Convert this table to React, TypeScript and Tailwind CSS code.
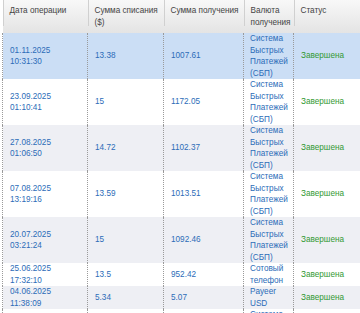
const rows = [
  { date: '01.11.2025', time: '10:31:30', sent: '13.38', got: '1007.61', cur: ['Система', 'Быстрых', 'Платежей', '(СБП)'], bg: 'bg-[#cbdef5]' },
  { date: '23.09.2025', time: '01:10:41', sent: '15', got: '1172.05', cur: ['Система', 'Быстрых', 'Платежей', '(СБП)'], bg: 'bg-white' },
  { date: '27.08.2025', time: '01:06:50', sent: '14.72', got: '1102.37', cur: ['Система', 'Быстрых', 'Платежей', '(СБП)'], bg: 'bg-[#eeeff4]' },
  { date: '07.08.2025', time: '13:19:16', sent: '13.59', got: '1013.51', cur: ['Система', 'Быстрых', 'Платежей', '(СБП)'], bg: 'bg-white' },
  { date: '20.07.2025', time: '03:21:24', sent: '15', got: '1092.46', cur: ['Система', 'Быстрых', 'Платежей', '(СБП)'], bg: 'bg-[#eeeff4]' },
  { date: '25.06.2025', time: '17:32:10', sent: '13.5', got: '952.42', cur: ['Сотовый', 'телефон'], bg: 'bg-white' },
  { date: '04.06.2025', time: '11:38:09', sent: '5.34', got: '5.07', cur: ['Payeer', 'USD'], bg: 'bg-[#eeeff4]' },
  { date: '08.05.2025', time: '12:04:55', sent: '13.2', got: '990.18', cur: ['Система', 'Быстрых', 'Платежей', '(СБП)'], bg: 'bg-white' },
];

const headers = [
  ['Дата операции'],
  ['Сумма списания', '($)'],
  ['Сумма получения'],
  ['Валюта', 'получения'],
  ['Статус'],
];

const widths = ['w-[85px]', 'w-[76px]', 'w-[80px]', 'w-[50px]', 'w-[67px]'];

export default function App() {
  return (
    <div className="w-[360px] h-[313px] overflow-hidden bg-white pl-[2px]" style={{ fontFamily: '"Liberation Sans", Arial, sans-serif' }}>
      <table className="w-[358px] border-collapse table-fixed text-[8.2px] leading-[11.5px]">
        <thead>
          <tr className="h-[33px] bg-gradient-to-b from-[#f8f8f8] to-[#e4e4e4]">
            {headers.map((h, i) => (
              <th key={i} className={`${widths[i]} align-top text-left font-normal text-[#444] pl-[7px] pr-[2px] pt-[5px] relative`}>
                <span className="absolute left-0 top-0 h-[26px] w-px bg-[#d0d0d0]" />
                {h.map((l, j) => (
                  <div key={j} className="whitespace-nowrap">{l}</div>
                ))}
              </th>
            ))}
          </tr>
        </thead>
        <tbody>
          {rows.map((r, i) => (
            <tr key={i} className={r.bg}>
              <td className="align-middle text-[#2c6cb8] pl-[7px] border-l border-dotted border-[#9a9a9a]">
                <div>{r.date}</div>
                <div>{r.time}</div>
              </td>
              <td className="align-middle text-[#2c6cb8] pl-[7px] border-l border-dotted border-[#9a9a9a]">{r.sent}</td>
              <td className="align-middle text-[#2c6cb8] pl-[7px] border-l border-dotted border-[#9a9a9a]">{r.got}</td>
              <td className="align-middle text-[#2c6cb8] pl-[6px] border-l border-r border-dotted border-[#9a9a9a]">
                {r.cur.map((c, j) => (
                  <div key={j}>{c}</div>
                ))}
              </td>
              <td className="align-middle text-[#339933] pl-[7px]">Завершена</td>
            </tr>
          ))}
        </tbody>
      </table>
    </div>
  );
}
